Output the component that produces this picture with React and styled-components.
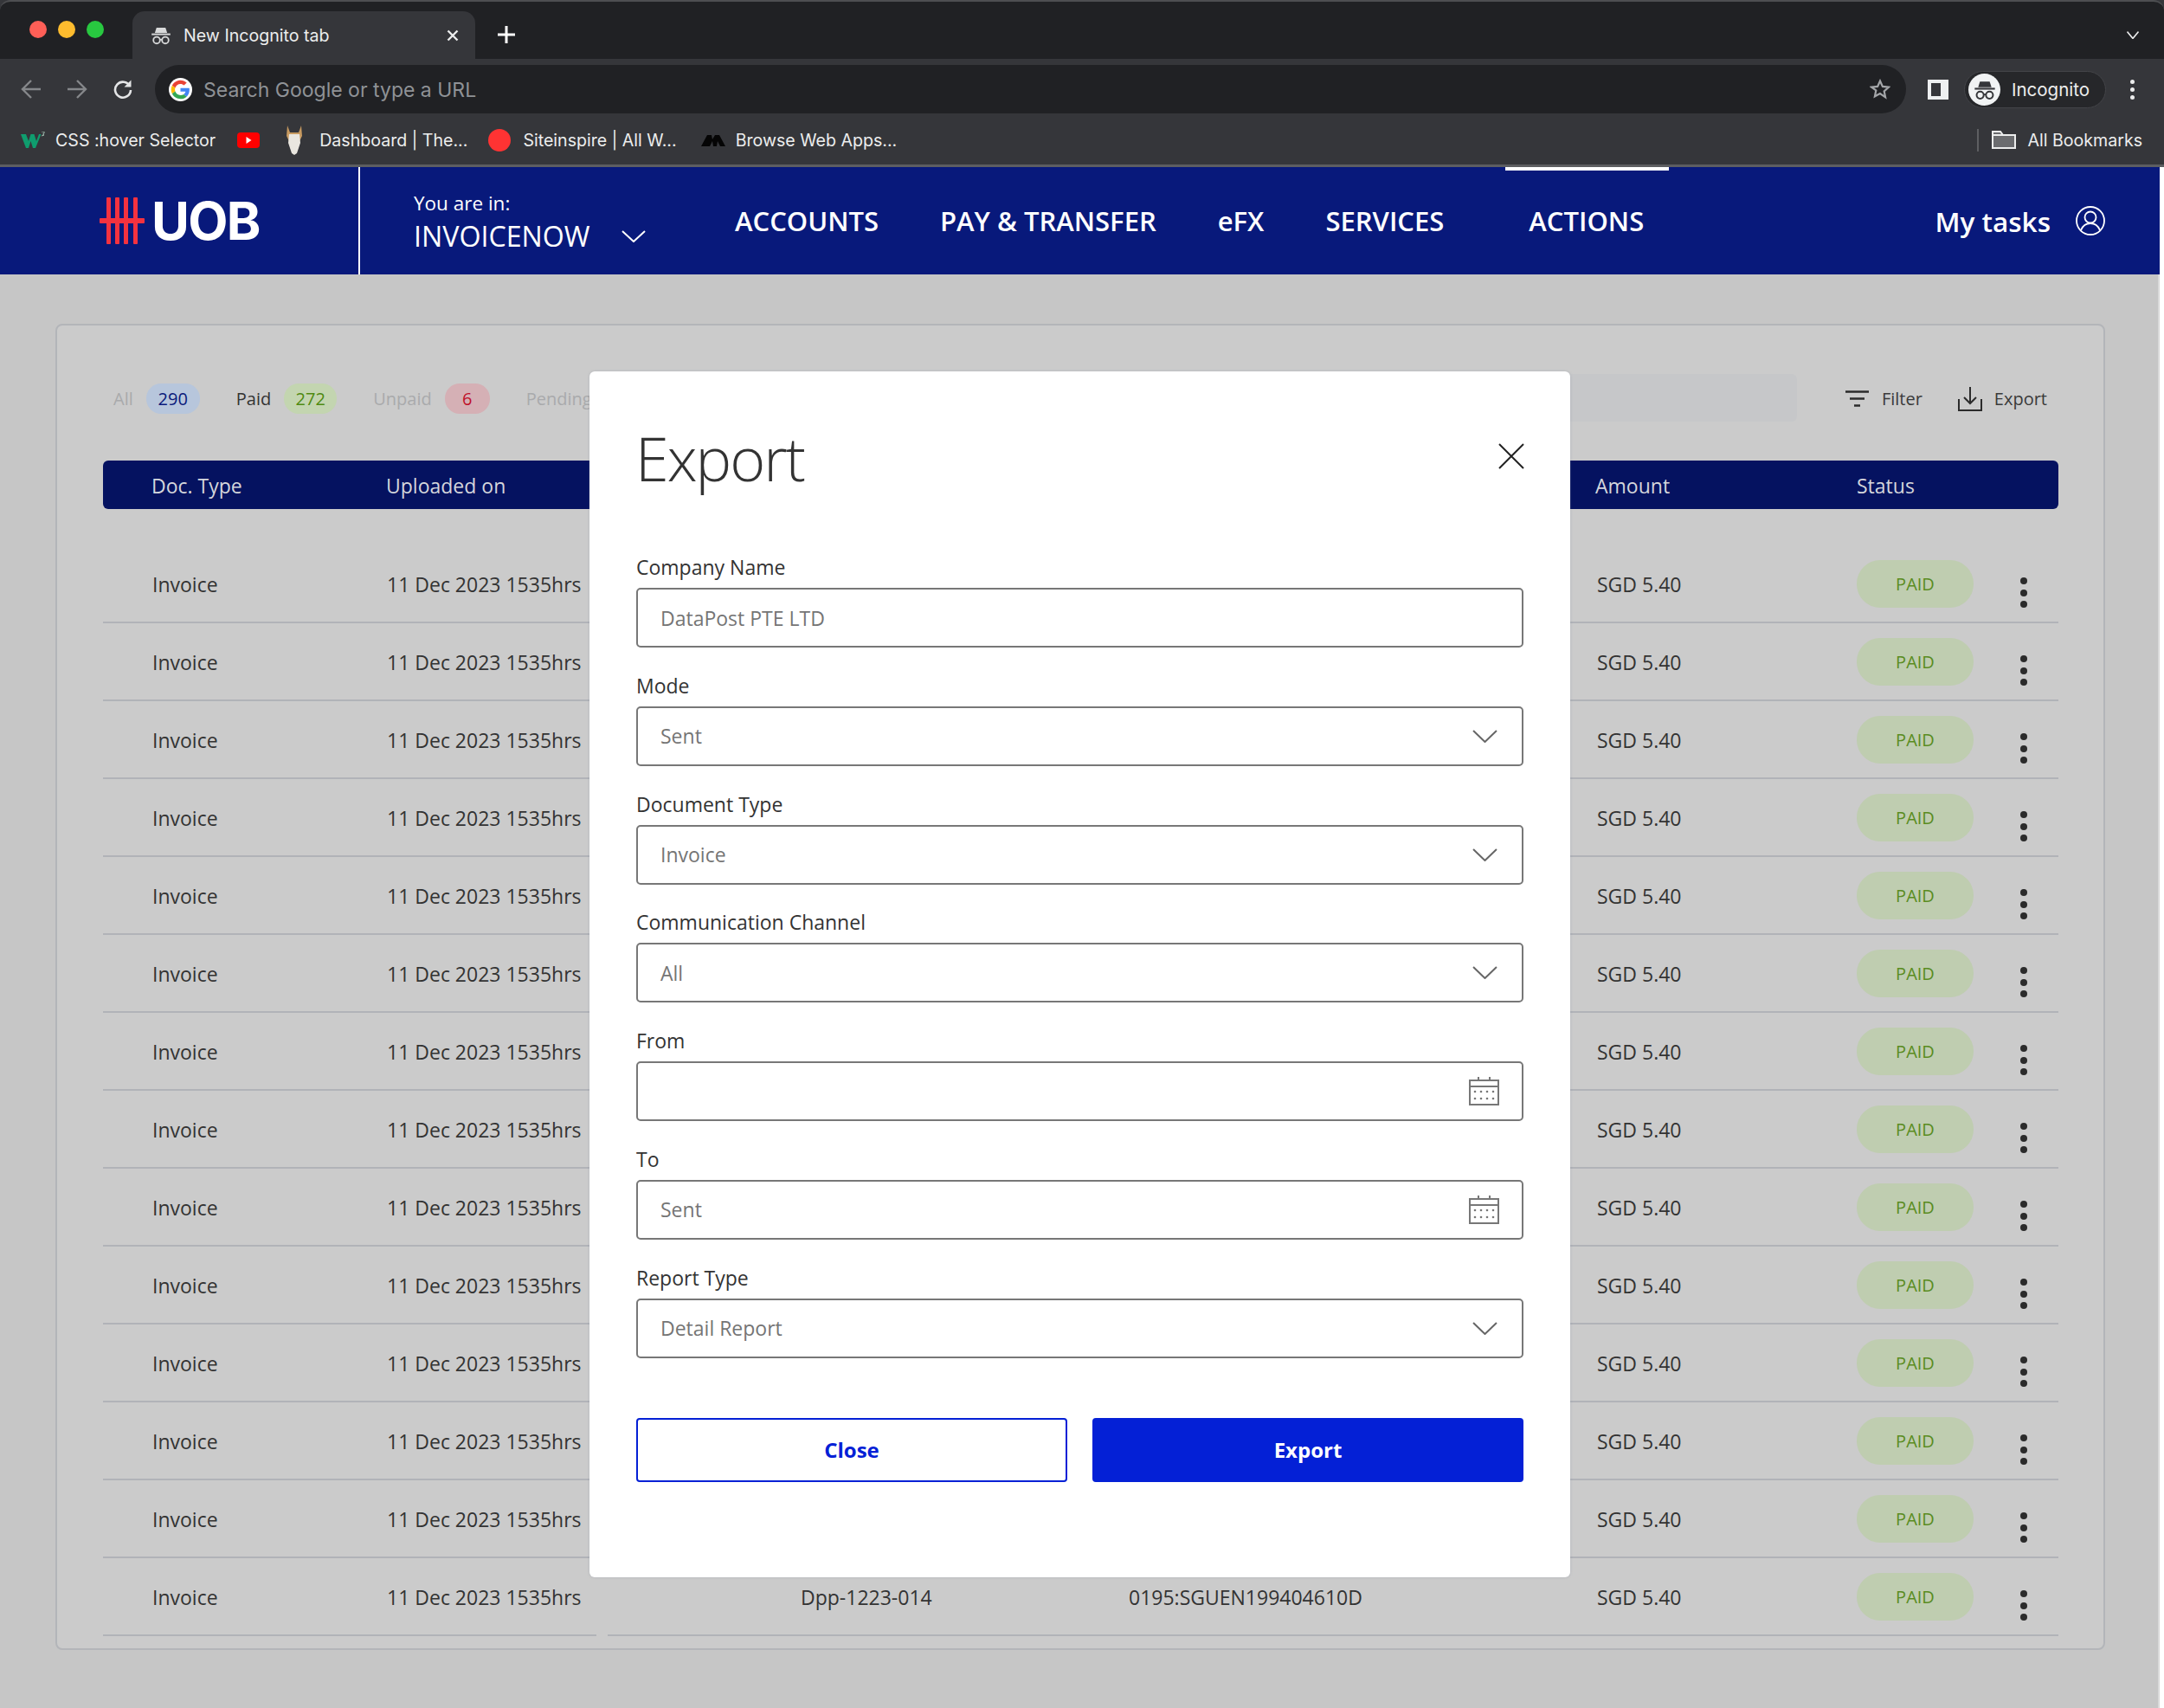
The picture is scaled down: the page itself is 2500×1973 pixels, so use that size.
import React from 'react'
import styled, { createGlobalStyle } from 'styled-components'

const GlobalStyle = createGlobalStyle`
  html, body {
    margin: 0;
    padding: 0;
    background: #fff;
  }
  * {
    box-sizing: border-box;
  }
`

const Screen = styled.div`
  position: relative;
  width: 2500px;
  height: 1973px;
  overflow: hidden;
  background: #fff;
  font-family: "Open Sans", "Liberation Sans", sans-serif;
  color: #333;
`

/* browser chrome */
const Browser = styled.div`
  height: 193px;
  background: #35363a;
  border-bottom: 3px solid #5d5e61;
  font-family: Inter, "Liberation Sans", sans-serif;
  color: #eceded;
`

const TabStrip = styled.div`
  display: flex;
  height: 68px;
  padding-left: 34px;
  background: #202124;
  border-top: 2px solid #4d4e51;
  border-radius: 12px 12px 0 0;
`

const Lights = styled.div`
  display: flex;
  gap: 13px;
  align-items: center;
  width: 119px;
  height: 46px;
  margin-top: 9px;
`

const Light = styled.span`
  width: 20px;
  height: 20px;
  border-radius: 50%;
  background: ${p => p.$color};
`

const Tab = styled.div`
  display: flex;
  align-items: center;
  width: 396px;
  height: 55px;
  margin-top: 11px;
  padding: 0 19px 0 20px;
  background: #35363a;
  border-radius: 14px 14px 0 0;
  font-size: 19.6px;
`

const TabTitle = styled.span`
  flex: 1;
  margin-left: 13px;
  white-space: nowrap;
`

const NewTab = styled.div`
  display: flex;
  align-items: center;
  margin: 15px 0 0 25px;
  height: 46px;
`

const TabMenu = styled.div`
  display: flex;
  align-items: center;
  height: 46px;
  margin: 15px 29px 0 auto;
`

const Toolbar = styled.div`
  display: flex;
  align-items: flex-start;
  height: 75px;
  padding: 7px 0 0 9px;
`

const ToolButton = styled.div`
  display: flex;
  align-items: center;
  justify-content: center;
  width: 53px;
  height: 56px;
`

const AddressBar = styled.div`
  display: flex;
  align-items: center;
  width: 2023px;
  height: 56px;
  margin-left: 11px;
  padding: 0 18px 0 16px;
  background: #202124;
  border-radius: 28px;
`

const AddressText = styled.span`
  flex: 1;
  margin-left: 13px;
  padding-top: 1px;
  font-size: 23px;
  color: #8f9296;
  white-space: nowrap;
`

const SidePanelIcon = styled.span`
  display: block;
  width: 24px;
  height: 23px;
  margin: 17px 0 0 25px;
  background: #eef0f1;
  border: 4px solid #eef0f1;
  border-right-width: 9px;
  box-shadow: inset 0 0 0 20px #35363a;
`

const IncognitoPill = styled.div`
  display: flex;
  align-items: center;
  width: 164px;
  height: 43px;
  margin: 7px 0 0 18px;
  padding-left: 4px;
  background: #26272a;
  border: 1px solid #434448;
  border-radius: 22px;
  font-size: 20.5px;
`

const Avatar = styled.span`
  display: flex;
  align-items: center;
  justify-content: center;
  width: 37px;
  height: 37px;
  margin-right: 13px;
  background: #f1f3f4;
  border-radius: 50%;
`

const MenuDots = styled.div`
  display: flex;
  flex-direction: column;
  gap: 4px;
  margin: 17px 0 0 28px;
  span {
    width: 5px;
    height: 5px;
    border-radius: 50%;
    background: #eceded;
  }
`

const BookmarkBar = styled.div`
  display: flex;
  align-items: center;
  height: 47px;
  padding: 0 25px 10px 24px;
  font-size: 19.6px;
  white-space: nowrap;
`

const Bookmark = styled.div`
  display: flex;
  align-items: center;
  gap: ${p => p.$gap || 12}px;
  margin-right: ${p => p.$after || 0}px;
`

const AllBookmarks = styled.div`
  display: flex;
  align-items: center;
  gap: 13px;
  height: 26px;
  margin-left: auto;
  padding-left: 15px;
  border-left: 2px solid #5d5e61;
`

/* app */
const Nav = styled.nav`
  display: flex;
  align-items: stretch;
  width: 2495px;
  height: 124px;
  background: #08197b;
  color: #fff;
`

const LogoCell = styled.div`
  display: flex;
  align-items: center;
  gap: 8px;
  width: 416px;
  padding: 0 0 0 115px;
  border-right: 2px solid #fff;
`

const LogoText = styled.span`
  font-family: Inter, "Liberation Sans", sans-serif;
  font-size: 60px;
  font-weight: 700;
  line-height: 1;
  letter-spacing: -1.7px;
`

const Context = styled.div`
  display: flex;
  flex-direction: column;
  justify-content: center;
  width: 433px;
  padding: 0 0 0 62px;
`

const ContextLabel = styled.span`
  font-size: 22.5px;
  line-height: 36px;
`

const ContextValue = styled.span`
  display: flex;
  align-items: center;
  gap: 36px;
  font-size: 32.2px;
  line-height: 40px;
`

const NavLinks = styled.div`
  display: flex;
  gap: 71px;
`

const NavLink = styled.a`
  display: flex;
  align-items: center;
  height: 100%;
  padding: 0 ${p => (p.$active ? '29px' : '0')} 4px ${p => (p.$active ? '27px' : '0')};
  border-top: 4px solid ${p => (p.$active ? '#fff' : 'transparent')};
  font-size: 31px;
  font-weight: 600;
  white-space: nowrap;
`

const Tasks = styled.div`
  display: flex;
  align-items: center;
  gap: 29px;
  margin-left: auto;
  padding: 0 63px 0 0;
  font-size: 31.5px;
  font-weight: 600;
`

const Main = styled.main`
  width: 2495px;
  height: 1656px;
  padding: 57px 61px 0 64px;
  background: #c6c6c6;
  border-right: 2px solid #dadada;
`

const Card = styled.section`
  height: 1532px;
  padding: 56px 52px 0 53px;
  background: #cbcbcb;
  border: 2px solid #b3b5b9;
  border-radius: 8px;
`

const FilterBar = styled.div`
  display: flex;
  align-items: center;
  height: 55px;
  padding: 0 13px 0 12px;
  font-size: 20px;
`

const StatusTab = styled.div`
  display: flex;
  align-items: center;
  gap: 15px;
  margin: 2px 42px 0 0;
  color: ${p => (p.$selected ? '#333' : '#a9aaac')};
  white-space: nowrap;
`

const CountPill = styled.span`
  display: flex;
  align-items: center;
  justify-content: center;
  min-width: ${p => p.$width}px;
  height: 35px;
  background: ${p => p.$bg};
  border-radius: 17px;
  color: ${p => p.$color};
`

const SearchBox = styled.div`
  flex: 1;
  align-self: stretch;
  margin-right: 56px;
  background: #c6c7c9;
  border-radius: 6px;
`

const ToolAction = styled.div`
  display: flex;
  align-items: center;
  gap: ${p => p.$gap}px;
  margin: 2px 0 0 ${p => p.$offset || 0}px;
  color: #3a3a3a;
`

const HeaderRow = styled.div`
  display: grid;
  grid-template-columns: 271px 1397px 302px 1fr;
  align-items: center;
  height: 56px;
  margin-top: 45px;
  padding: 1px 0 0 56px;
  background: #051260;
  border-radius: 6px;
  color: #d4d6dc;
  font-size: 23px;
`

const Rows = styled.div`
  margin-top: 42px;
`

const Row = styled.div`
  display: grid;
  grid-template-columns: 570px 1fr;
  column-gap: 13px;
  height: 90px;
  font-size: 23px;
  color: #333;
`

const RowStart = styled.div`
  display: grid;
  grid-template-columns: 271px 1fr;
  align-items: center;
  padding-left: 57px;
  border-bottom: 2px solid #b1b3b8;
`

const RowEnd = styled.div`
  display: grid;
  grid-template-columns: 602px 541px 300px 189px 1fr;
  align-items: center;
  border-bottom: 2px solid #b1b3b8;
`

const Cell = styled.div`
  padding-top: 1px;
  padding-left: ${p => p.$inset || 0}px;
  white-space: nowrap;
`

const PaidPill = styled.span`
  display: flex;
  align-items: center;
  justify-content: center;
  width: 135px;
  height: 55px;
  padding-top: 1px;
  background: #bfcdb0;
  border-radius: 27px;
  color: #5a8c1f;
  font-size: 20px;
`

const Kebab = styled.div`
  display: flex;
  flex-direction: column;
  gap: 5.5px;
  margin-top: 21px;
  span {
    width: 8px;
    height: 8px;
    border-radius: 50%;
    background: #2b2b2b;
  }
`

/* modal */
const Modal = styled.div`
  position: absolute;
  left: 681px;
  top: 429px;
  width: 1133px;
  height: 1393px;
  padding: 50px 54px 0;
  background: #fff;
  border-radius: 6px;
  box-shadow: 0 0 3px rgba(120, 130, 150, 0.35);
`

const ModalHeader = styled.header`
  display: flex;
  align-items: center;
  justify-content: space-between;
  height: 100px;
  margin-bottom: 62px;
`

const ModalTitle = styled.h2`
  margin: -1px 0 0 -1px;
  font-size: 70px;
  font-weight: 300;
  line-height: 100px;
  letter-spacing: -2px;
  color: #333;
`

const CloseButton = styled.div`
  display: flex;
  margin: -5px -1px 0 0;
`

const Fields = styled.div`
  display: flex;
  flex-direction: column;
  gap: 29.8px;
`

const Field = styled.div`
  display: flex;
  flex-direction: column;
  gap: 9px;
`

const FieldLabel = styled.label`
  font-size: 23px;
  line-height: 29px;
  color: #333;
`

const InputBox = styled.div`
  display: flex;
  align-items: center;
  justify-content: space-between;
  height: 69px;
  padding: 0 ${p => (p.$select ? 28 : 26)}px 0 26px;
  background: #fff;
  border: 2px solid #777;
  border-radius: 5px;
  font-size: 23px;
  color: #757575;
`

const Actions = styled.div`
  display: grid;
  grid-template-columns: 1fr 1fr;
  gap: 29px;
  margin-top: 69px;
`

const Button = styled.button`
  height: 74px;
  padding: 0;
  background: ${p => (p.$primary ? '#0420d6' : '#fff')};
  border: 2px solid #0420d6;
  border-radius: 4px;
  color: ${p => (p.$primary ? '#fff' : '#0420d6')};
  font-family: inherit;
  font-size: 24px;
  font-weight: 700;
`

const IncognitoIcon = ({ size = 26, color = '#d8d9da' }) => (
  <svg width={size} height={size} viewBox="0 0 24 24" fill="none">
    <path d="M7.2 3.6h9.6l1.8 5.6H5.4z" fill={color} />
    <rect x="2" y="9.8" width="20" height="1.8" fill={color} />
    <circle cx="7.4" cy="17" r="3.5" stroke={color} strokeWidth="1.7" />
    <circle cx="16.6" cy="17" r="3.5" stroke={color} strokeWidth="1.7" />
    <path d="M10.8 16.4h2.4" stroke={color} strokeWidth="1.5" />
  </svg>
)

const GoogleIcon = () => (
  <svg width="27" height="27" viewBox="-6 -6 60 60">
    <circle cx="24" cy="24" r="30" fill="#fff" />
    <path fill="#EA4335" d="M24 9.5c3.54 0 6.71 1.22 9.21 3.6l6.85-6.85C35.9 2.38 30.47 0 24 0 14.62 0 6.51 5.38 2.56 13.22l7.98 6.19C12.43 13.72 17.74 9.5 24 9.5z" />
    <path fill="#4285F4" d="M46.98 24.55c0-1.57-.15-3.09-.38-4.55H24v9.02h12.94c-.58 2.96-2.26 5.48-4.78 7.18l7.73 6c4.51-4.18 7.09-10.36 7.09-17.65z" />
    <path fill="#FBBC05" d="M10.53 28.59c-.48-1.45-.76-2.99-.76-4.59s.27-3.14.76-4.59l-7.98-6.19C.92 16.46 0 20.12 0 24c0 3.88.92 7.54 2.56 10.78l7.97-6.19z" />
    <path fill="#34A853" d="M24 48c6.48 0 11.93-2.13 15.89-5.81l-7.73-6c-2.15 1.45-4.92 2.3-8.16 2.3-6.26 0-11.57-4.22-13.47-9.91l-7.98 6.19C6.51 42.62 14.62 48 24 48z" />
  </svg>
)

const Chevron = ({ width = 28, height = 14, color = '#fff', sw = 2 }) => (
  <svg width={width} height={height} viewBox="0 0 28 14" fill="none" preserveAspectRatio="none">
    <path d="M1 1l13 12L27 1" stroke={color} strokeWidth={sw} />
  </svg>
)

const CalendarIcon = () => (
  <svg width="35" height="33" viewBox="0 0 35 33" fill="none" stroke="#777" strokeWidth="2">
    <rect x="1" y="4" width="33" height="28" />
    <path d="M1 11h33M11 0v4M24 0v4" />
    <g fill="#777" stroke="none">
      {[7, 14, 21, 28].map(x => (
        <React.Fragment key={x}>
          <circle cx={x} cy="17" r="1.3" />
          <circle cx={x} cy="25" r="1.3" />
        </React.Fragment>
      ))}
    </g>
  </svg>
)

const BrowserBar = () => (
  <Browser>
    <TabStrip>
      <Lights>
        <Light $color="#ff5f57" />
        <Light $color="#febc2e" />
        <Light $color="#28c840" />
      </Lights>
      <Tab>
        <IncognitoIcon />
        <TabTitle>New Incognito tab</TabTitle>
        <svg width="14" height="14" viewBox="0 0 14 14" stroke="#eceded" strokeWidth="2.4">
          <path d="M1.5 1.5l11 11M12.5 1.5l-11 11" />
        </svg>
      </Tab>
      <NewTab>
        <svg width="22" height="22" viewBox="0 0 22 22" stroke="#fff" strokeWidth="3">
          <path d="M11 1v20M1 11h20" />
        </svg>
      </NewTab>
      <TabMenu>
        <Chevron width={14} height={9} color="#eceded" sw={3} />
      </TabMenu>
    </TabStrip>
    <Toolbar>
      <ToolButton>
        <svg width="24" height="22" viewBox="0 0 24 22" fill="none" stroke="#85878a" strokeWidth="2.4">
          <path d="M23 11H3M12 1L2 11l10 10" />
        </svg>
      </ToolButton>
      <ToolButton>
        <svg width="24" height="22" viewBox="0 0 24 22" fill="none" stroke="#85878a" strokeWidth="2.4">
          <path d="M1 11h20M12 1l10 10-10 10" />
        </svg>
      </ToolButton>
      <ToolButton>
        <svg width="24" height="24" viewBox="0 0 24 24" fill="none" stroke="#e4e5e6" strokeWidth="2.6">
          <path d="M20 8.5A9 9 0 1 0 21 13" />
          <path d="M21.5 1.5v8h-8" fill="#e4e5e6" stroke="none" />
        </svg>
      </ToolButton>
      <AddressBar>
        <GoogleIcon />
        <AddressText>Search Google or type a URL</AddressText>
        <svg width="24" height="24" viewBox="0 0 24 24" fill="none" stroke="#a4a6a9" strokeWidth="2.2">
          <path d="M12 2.5l2.9 6.4 7 .8-5.2 4.7 1.4 6.9L12 17l-6.1 3.3 1.4-6.9L2.100 9.700l7-.8z" />
        </svg>
      </AddressBar>
      <SidePanelIcon />
      <IncognitoPill>
        <Avatar><IncognitoIcon size={28} color="#35363a" /></Avatar>
        Incognito
      </IncognitoPill>
      <MenuDots><span /><span /><span /></MenuDots>
    </Toolbar>
    <BookmarkBar>
      <Bookmark $after={25}>
        <svg width="28" height="20" viewBox="0 0 28 20">
          <path d="M0 3h6l3 8 2.500-8h4l2.500 8 3-8h2.500L17 19h-3l-2.500-8L9 19H6z" fill="#0f9d6e" />
          <path d="M24 0h3v2l-1.500 1 1.500 1-3 1" fill="none" stroke="#9fb8ac" strokeWidth="1" />
        </svg>
        CSS :hover Selector
      </Bookmark>
      <Bookmark $after={30}>
        <svg width="26" height="18" viewBox="0 0 26 18">
          <rect width="26" height="18" rx="4" fill="#f00" />
          <path d="M10.500 5l6 4-6 4z" fill="#fff" />
        </svg>
      </Bookmark>
      <Bookmark $gap={19} $after={24}>
        <svg width="20" height="34" viewBox="0 0 20 34">
          <path d="M2 0l3 8h10l3-8 1 12-3 6H4l-3-6z" fill="#c79a60" />
          <path d="M4 10h12l1 10-4 12-3 2-3-2-4-12z" fill="#e9e6df" />
        </svg>
        Dashboard | The...
      </Bookmark>
      <Bookmark $gap={14} $after={28}>
        <svg width="26" height="26" viewBox="0 0 26 26"><circle cx="13" cy="13" r="13" fill="#ff3333" /></svg>
        Siteinspire | All W...
      </Bookmark>
      <Bookmark $gap={12}>
        <svg width="28" height="14" viewBox="0 0 28 14">
          <path d="M0 14L7 1h5l1 5 3-5h5l7 13h-6l-3-6-1 6h-4l-1-6-3 6z" fill="#050505" />
        </svg>
        Browse Web Apps...
      </Bookmark>
      <AllBookmarks>
        <svg width="28" height="21" viewBox="0 0 28 21" fill="none" stroke="#eceded" strokeWidth="2">
          <path d="M1 20V1h9l3 4h14v15z" fill="#6b6c6f" />
          <path d="M1 5h12" />
        </svg>
        All Bookmarks
      </AllBookmarks>
    </BookmarkBar>
  </Browser>
)

const TopNav = () => (
  <Nav>
    <LogoCell>
      <svg width="52" height="54" viewBox="0 0 52 54" fill="#f4323f">
        <rect x="8" width="5" height="54" rx="1" />
        <rect x="18" width="5" height="54" rx="1" />
        <rect x="28" width="5" height="54" rx="1" />
        <rect x="39" width="5" height="54" rx="1" />
        <rect y="24" width="52" height="6" rx="1" />
      </svg>
      <LogoText>UOB</LogoText>
    </LogoCell>
    <Context>
      <ContextLabel>You are in:</ContextLabel>
      <ContextValue>
        INVOICENOW
        <Chevron />
      </ContextValue>
    </Context>
    <NavLinks>
      <NavLink>ACCOUNTS</NavLink>
      <NavLink>PAY &amp; TRANSFER</NavLink>
      <NavLink>eFX</NavLink>
      <NavLink>SERVICES</NavLink>
      <NavLink $active>ACTIONS</NavLink>
    </NavLinks>
    <Tasks>
      My tasks
      <svg width="34" height="34" viewBox="0 0 34 34" fill="none" stroke="#fff" strokeWidth="1.8">
        <circle cx="17" cy="17" r="16" />
        <circle cx="17" cy="13" r="6.500" />
        <path d="M6 28c2-5 6-8 11-8s9 3 11 8" />
      </svg>
    </Tasks>
  </Nav>
)

// only the last row's document cells show from behind the modal
const rows = Array.from({ length: 14 }, (_, i) => ({
  id: i,
  doc: i === 13 ? 'Dpp-1223-014' : '',
  receiver: i === 13 ? '0195:SGUEN199404610D' : ''
}))

const InvoiceTable = () => (
  <Card>
    <FilterBar>
      <StatusTab>
        All
        <CountPill $width={62} $bg="#b7c6dc" $color="#0a1a7b">290</CountPill>
      </StatusTab>
      <StatusTab $selected>
        Paid
        <CountPill $width={61} $bg="#c3d5b0" $color="#4f8a10">272</CountPill>
      </StatusTab>
      <StatusTab>
        Unpaid
        <CountPill $width={52} $bg="#d5b0b5" $color="#c0112a">6</CountPill>
      </StatusTab>
      <StatusTab>Pending</StatusTab>
      <SearchBox />
      <ToolAction $gap={15}>
        <svg width="27" height="19" viewBox="0 0 27 19" stroke="#2b2b2b" strokeWidth="2.600">
          <path d="M0 1.500h27M5 9.500h17M10 17.500h7" />
        </svg>
        Filter
      </ToolAction>
      <ToolAction $gap={14} $offset={41}>
        <svg width="28" height="28" viewBox="0 0 28 28" fill="none" stroke="#2b2b2b" strokeWidth="2">
          <path d="M14 0v19M7 12l7 7 7-7M1 14v13h26V14" />
        </svg>
        Export
      </ToolAction>
    </FilterBar>
    <HeaderRow>
      <span>Doc. Type</span>
      <span>Uploaded on</span>
      <span>Amount</span>
      <span>Status</span>
    </HeaderRow>
    <Rows>
      {rows.map(row => (
        <Row key={row.id}>
          <RowStart>
            <Cell>Invoice</Cell>
            <Cell>11 Dec 2023 1535hrs</Cell>
          </RowStart>
          <RowEnd>
            <Cell $inset={223}>{row.doc}</Cell>
            <Cell>{row.receiver}</Cell>
            <Cell>SGD 5.40</Cell>
            <PaidPill>PAID</PaidPill>
            <Kebab><span /><span /><span /></Kebab>
          </RowEnd>
        </Row>
      ))}
    </Rows>
  </Card>
)

const fields = [
  { label: 'Company Name', value: 'DataPost PTE LTD' },
  { label: 'Mode', value: 'Sent', kind: 'select' },
  { label: 'Document Type', value: 'Invoice', kind: 'select' },
  { label: 'Communication Channel', value: 'All', kind: 'select' },
  { label: 'From', value: '', kind: 'date' },
  { label: 'To', value: 'Sent', kind: 'date' },
  { label: 'Report Type', value: 'Detail Report', kind: 'select' }
]

const ExportModal = () => (
  <Modal>
    <ModalHeader>
      <ModalTitle>Export</ModalTitle>
      <CloseButton>
        <svg width="30" height="30" viewBox="0 0 30 30" stroke="#222" strokeWidth="2">
          <path d="M1 1l28 28M29 1L1 29" />
        </svg>
      </CloseButton>
    </ModalHeader>
    <Fields>
      {fields.map(field => (
        <Field key={field.label}>
          <FieldLabel>{field.label}</FieldLabel>
          <InputBox $select={field.kind === 'select'}>
            <span>{field.value}</span>
            {field.kind === 'select' && <Chevron width={29} height={15} color="#666" />}
            {field.kind === 'date' && <CalendarIcon />}
          </InputBox>
        </Field>
      ))}
    </Fields>
    <Actions>
      <Button>Close</Button>
      <Button $primary>Export</Button>
    </Actions>
  </Modal>
)

const App = () => (
  <Screen>
    <GlobalStyle />
    <BrowserBar />
    <TopNav />
    <Main>
      <InvoiceTable />
    </Main>
    <ExportModal />
  </Screen>
)

export default App
